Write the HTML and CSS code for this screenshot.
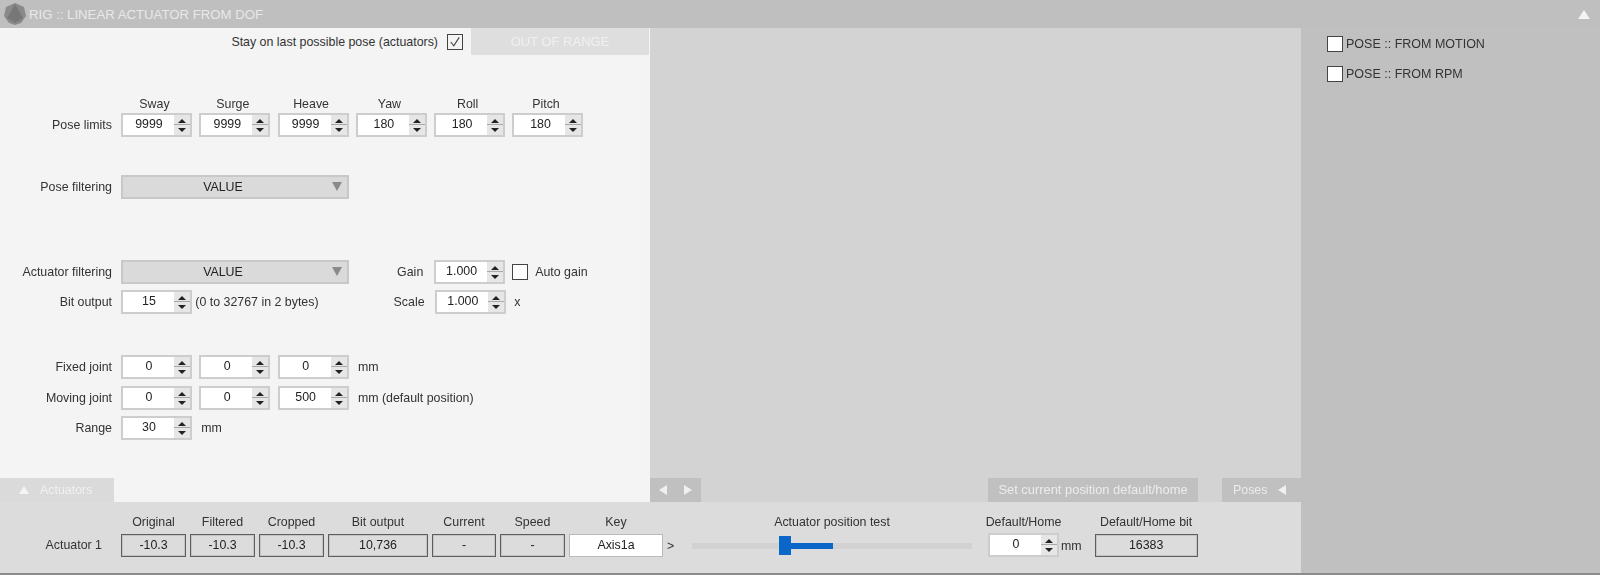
FILE: index.html
```html
<!DOCTYPE html>
<html lang="en">
<head>
<meta charset="utf-8">
<title>RIG :: LINEAR ACTUATOR FROM DOF</title>
<link rel="stylesheet" href="styles.css">
</head>
<body>
<div class="app">
  <header class="titlebar">
    <svg class="logo" viewBox="0 0 24 24" width="24" height="24"><polygon points="12,1 21,5 23,14 18,21 12,23 6,21 1,14 3,5" fill="#8a8a8a"/><polygon points="12,2 20,16 12,21 4,16" fill="#777"/></svg>
    <span class="title">RIG :: LINEAR ACTUATOR FROM DOF</span>
    <svg class="collapse" viewBox="0 0 12 9" width="12" height="9"><polygon points="6,0 12,9 0,9" fill="#f4f4f4"/></svg>
  </header>
  <div class="body">
    <div class="main">
      <div class="upper">
        <section class="form">
          <div class="toprow">
            <span>Stay on last possible pose (actuators)</span>
            <span class="check on"><svg viewBox="0 0 15 15" width="14" height="14"><path d="M3 7.5l3.2 4L12 2.5" fill="none" stroke="#444" stroke-width="1.2"/></svg></span>
            <span class="oor">OUT OF RANGE</span>
          </div>
          <div class="heads">
            <span class="head">Sway</span><span class="head">Surge</span><span class="head">Heave</span><span class="head">Yaw</span><span class="head">Roll</span><span class="head">Pitch</span>
          </div>
          <div class="row">
            <label class="lbl">Pose limits</label>
            <div class="spin"><span class="val">9999</span><span class="btns"><i class="up"></i><i class="down"></i></span></div>
            <div class="spin"><span class="val">9999</span><span class="btns"><i class="up"></i><i class="down"></i></span></div>
            <div class="spin"><span class="val">9999</span><span class="btns"><i class="up"></i><i class="down"></i></span></div>
            <div class="spin"><span class="val">180</span><span class="btns"><i class="up"></i><i class="down"></i></span></div>
            <div class="spin"><span class="val">180</span><span class="btns"><i class="up"></i><i class="down"></i></span></div>
            <div class="spin"><span class="val">180</span><span class="btns"><i class="up"></i><i class="down"></i></span></div>
          </div>
          <div class="row row-pose">
            <label class="lbl">Pose filtering</label>
            <div class="combo"><span>VALUE</span><i class="caret"></i></div>
          </div>
          <div class="row row-act">
            <label class="lbl">Actuator filtering</label>
            <div class="combo"><span>VALUE</span><i class="caret"></i></div>
            <label class="lbl2">Gain</label>
            <div class="spin"><span class="val">1.000</span><span class="btns"><i class="up"></i><i class="down"></i></span></div>
            <span class="check auto"></span>
            <span class="note">Auto gain</span>
          </div>
          <div class="row row-bit">
            <label class="lbl">Bit output</label>
            <div class="spin"><span class="val">15</span><span class="btns"><i class="up"></i><i class="down"></i></span></div>
            <span class="note range">(0 to 32767 in 2 bytes)</span>
            <label class="lbl2 scale">Scale</label>
            <div class="spin"><span class="val">1.000</span><span class="btns"><i class="up"></i><i class="down"></i></span></div>
            <span class="note x">x</span>
          </div>
          <div class="row row-fixed">
            <label class="lbl">Fixed joint</label>
            <div class="spin"><span class="val">0</span><span class="btns"><i class="up"></i><i class="down"></i></span></div>
            <div class="spin"><span class="val">0</span><span class="btns"><i class="up"></i><i class="down"></i></span></div>
            <div class="spin"><span class="val">0</span><span class="btns"><i class="up"></i><i class="down"></i></span></div>
            <span class="note unit">mm</span>
          </div>
          <div class="row row-moving">
            <label class="lbl">Moving joint</label>
            <div class="spin"><span class="val">0</span><span class="btns"><i class="up"></i><i class="down"></i></span></div>
            <div class="spin"><span class="val">0</span><span class="btns"><i class="up"></i><i class="down"></i></span></div>
            <div class="spin"><span class="val">500</span><span class="btns"><i class="up"></i><i class="down"></i></span></div>
            <span class="note unit">mm (default position)</span>
          </div>
          <div class="row row-range">
            <label class="lbl">Range</label>
            <div class="spin"><span class="val">30</span><span class="btns"><i class="up"></i><i class="down"></i></span></div>
            <span class="note unit">mm</span>
          </div>
          <div class="tab-actuators"><i class="tri-up"></i><span>Actuators</span></div>
        </section>
        <section class="preview">
          <div class="tabs">
            <div class="nav"><i class="tri-left"></i><i class="tri-right"></i></div>
            <div class="btn-home">Set current position default/home</div>
            <div class="btn-poses"><span>Poses</span><i class="tri-left"></i></div>
          </div>
        </section>
      </div>
      <section class="actuator">
        <span class="act-name">Actuator 1</span>
        <div class="col w65"><span class="cap">Original</span><span class="box">-10.3</span></div>
        <div class="col w65"><span class="cap">Filtered</span><span class="box">-10.3</span></div>
        <div class="col w65"><span class="cap">Cropped</span><span class="box">-10.3</span></div>
        <div class="col w100"><span class="cap">Bit output</span><span class="box">10,736</span></div>
        <div class="col w64"><span class="cap">Current</span><span class="box">-</span></div>
        <div class="col w65"><span class="cap">Speed</span><span class="box">-</span></div>
        <div class="col w94"><span class="cap">Key</span><span class="box key">Axis1a</span></div>
        <span class="more">&gt;</span>
        <div class="col w280"><span class="cap">Actuator position test</span>
          <div class="slider"><div class="thumb"></div><div class="fill"></div></div>
        </div>
        <div class="col w71"><span class="cap">Default/Home</span>
          <div class="spin"><span class="val">0</span><span class="btns"><i class="up"></i><i class="down"></i></span></div>
        </div>
        <span class="note mm">mm</span>
        <div class="col w103"><span class="cap">Default/Home bit</span><span class="box">16383</span></div>
      </section>
    </div>
    <aside class="side">
      <div class="opt"><span class="check"></span><span>POSE :: FROM MOTION</span></div>
      <div class="opt"><span class="check"></span><span>POSE :: FROM RPM</span></div>
    </aside>
  </div>
</div>
</body>
</html>
```
FILE: styles.css
```css
* { box-sizing: border-box; }
html, body { margin: 0; height: 100%; }
body { overflow: hidden; background: #c0c0c0; font: 12.4px "Liberation Sans", Arial, sans-serif; color: #333; }
.app { width: 1600px; height: 575px; display: flex; flex-direction: column; filter: blur(0.45px); border-bottom: 2px solid #8c8c8c; }

.titlebar { height: 28px; flex: none; display: flex; align-items: center; padding: 0 10px 0 3px; background: #bfbfbf; color: #e8e8e8; }
.logo { flex: none; }
.title { margin-left: 2px; font-size: 13.2px; }
.collapse { margin-left: auto; }

.body { flex: 1; display: flex; min-height: 0; }
.main { width: 1301px; flex: none; display: flex; flex-direction: column; }
.upper { height: 474px; flex: none; display: flex; }

.form { width: 650px; flex: none; background: #f4f4f4; display: flex; flex-direction: column; }
.toprow { height: 27px; flex: none; display: flex; align-items: center; justify-content: flex-end; padding-right: 1px; }
.check { width: 16px; height: 16px; flex: none; background: #fff; border: 1px solid #444; display: block; }
.check svg { display: block; }
.check.on { background: #f4f4f4; margin: 0 8px 0 9px; }
.oor { width: 178px; height: 27px; background: #dedede; color: #f0f0f0; text-align: center; line-height: 27px; font-size: 13px; }

.heads { display: flex; gap: 7.3px; margin: 40px 0 0 121px; height: 18px; flex: none; }
.head { width: 71px; text-align: center; line-height: 18px; padding-right: 4px; }

.row { display: flex; align-items: center; height: 24px; flex: none; gap: 7.3px; }
.lbl { width: 112px; text-align: right; flex: none; margin-right: 1.7px; white-space: nowrap; }
.row-pose { margin-top: 38px; }
.row-act { margin-top: 61px; }
.row-bit { margin-top: 6px; }
.row-fixed { margin-top: 41px; }
.row-moving { margin-top: 7px; }
.row-range { margin-top: 6px; }

.spin { width: 71px; height: 24px; flex: none; display: flex; background: #fff; border: 2px solid #cdcdcd; }
.val { flex: 1; text-align: center; line-height: 19px; color: #222; padding-left: 1px; }
.btns { width: 16px; flex: none; background: linear-gradient(#e6e6e6 0 9px, #a8a8a8 9px 10px, #e6e6e6 10px); display: flex; flex-direction: column; align-items: center; justify-content: center; gap: 5px; }
.up { width: 0; height: 0; border: 4px solid transparent; border-top: 0; border-bottom: 4px solid #222; }
.down { width: 0; height: 0; border: 4px solid transparent; border-bottom: 0; border-top: 4px solid #222; }

.combo { width: 228px; height: 24px; flex: none; position: relative; background: #dadada; border: 2px solid #c8c8c8; text-align: center; line-height: 20px; padding-right: 24px; color: #222; }
.caret { position: absolute; right: 5px; top: 5px; width: 0; height: 0; border: 5px solid transparent; border-bottom: 0; border-top: 9px solid #8a8a8a; }

.lbl2 { margin-left: 31px; margin-right: 3px; width: 36px; text-align: right; flex: none; }
.scale { margin-left: 49px; }
.note { flex: none; white-space: nowrap; }
.range { margin-left: -4px; width: 137px; }
.x { margin-left: 1px; }
.unit { margin-left: 2px; }

.tab-actuators { margin-top: auto; width: 114px; height: 24px; flex: none; background: #dadada; color: #f0f0f0; display: flex; align-items: center; padding-left: 19px; gap: 11px; }
.tri-up { width: 0; height: 0; border: 5px solid transparent; border-top: 0; border-bottom: 8px solid #f4f4f4; }
.tri-left { width: 0; height: 0; border: 5px solid transparent; border-left: 0; border-right: 8px solid #f0f0f0; }
.tri-right { width: 0; height: 0; border: 5px solid transparent; border-right: 0; border-left: 8px solid #f0f0f0; }

.preview { flex: 1; background: #d3d3d3; display: flex; flex-direction: column; justify-content: flex-end; }
.tabs { height: 24px; display: flex; }
.nav { width: 51px; background: #c0c0c0; display: flex; align-items: center; justify-content: center; gap: 17px; }
.btn-home { width: 210px; margin-left: 287px; background: #c0c0c0; color: #ececec; text-align: center; line-height: 24px; font-size: 12.9px; }
.btn-poses { width: 79px; margin-left: 24px; background: #c0c0c0; color: #ececec; display: flex; align-items: center; padding-left: 11px; gap: 11px; }

.actuator { height: 71px; flex: none; background: #dcdcdc; display: flex; align-items: flex-end; gap: 4px; padding: 0 0 16px 0; }
.act-name { width: 102px; text-align: right; line-height: 23px; margin-right: 15px; flex: none; }
.col { display: flex; flex-direction: column; align-items: center; flex: none; }
.w65 { width: 65px; } .w64 { width: 64px; } .w100 { width: 100px; } .w94 { width: 94px; }
.w280 { width: 280px; margin-left: 11px; } .w71 { width: 71px; margin-left: 12px; } .w103 { width: 103px; margin-left: 9px; }
.cap { line-height: 16px; margin-bottom: 4px; white-space: nowrap; }
.col .spin { margin-top: -1px; margin-bottom: 0; }
.box { width: 100%; height: 23px; border: 1px solid #5e5e5e; background: #dcdcdc; text-align: center; line-height: 21px; box-shadow: inset 0 0 0 1px #c4c4c4; color: #222; }
.key { background: #fff; border: 1px solid #bbb; box-shadow: none; }
.more { width: 10px; line-height: 21px; flex: none; }
.mm { line-height: 22px; margin-left: -2px; }
.slider { width: 100%; height: 23px; position: relative; }
.slider::before { content: ""; position: absolute; left: 0; right: 0; top: 9px; height: 6px; background: #d2d2d2; }
.thumb { position: absolute; left: 87px; top: 2px; width: 12px; height: 19px; background: #0a66c8; }
.fill { position: absolute; left: 99px; top: 9px; width: 42px; height: 6px; background: #0a66c8; }

.side { flex: 1; background: #c0c0c0; padding: 8px 0 0 26px; }
.opt { display: flex; align-items: center; height: 16px; margin-bottom: 14px; gap: 3px; font-size: 12.5px; color: #333; }
```
